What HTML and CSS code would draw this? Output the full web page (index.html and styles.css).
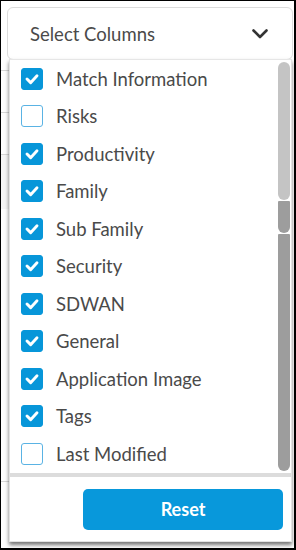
FILE: index.html
```html
<!DOCTYPE html>
<html>
<head>
<meta charset="utf-8">
<link rel="stylesheet" href="styles.css">
</head>
<body>
<div class="frame">
  <div class="select">
    <span class="select-label">Select Columns</span>
    <svg class="chevron" width="16" height="10" viewBox="0 0 16 10"><polyline points="1.5,1.5 8,8 14.5,1.5" fill="none" stroke="#333" stroke-width="2.6" stroke-linecap="round" stroke-linejoin="round"/></svg>
  </div>
  <div class="panel">
    <div class="list-wrap">
      <ul class="list">
        <li class="item"><span class="box checked"><svg viewBox="0 0 22 22"><polyline points="5.5,11 9.5,15 16.5,7.5"/></svg></span>Match Information</li>
        <li class="item"><span class="box"></span>Risks</li>
        <li class="item"><span class="box checked"><svg viewBox="0 0 22 22"><polyline points="5.5,11 9.5,15 16.5,7.5"/></svg></span>Productivity</li>
        <li class="item"><span class="box checked"><svg viewBox="0 0 22 22"><polyline points="5.5,11 9.5,15 16.5,7.5"/></svg></span>Family</li>
        <li class="item"><span class="box checked"><svg viewBox="0 0 22 22"><polyline points="5.5,11 9.5,15 16.5,7.5"/></svg></span>Sub Family</li>
        <li class="item"><span class="box checked"><svg viewBox="0 0 22 22"><polyline points="5.5,11 9.5,15 16.5,7.5"/></svg></span>Security</li>
        <li class="item"><span class="box checked"><svg viewBox="0 0 22 22"><polyline points="5.5,11 9.5,15 16.5,7.5"/></svg></span>SDWAN</li>
        <li class="item"><span class="box checked"><svg viewBox="0 0 22 22"><polyline points="5.5,11 9.5,15 16.5,7.5"/></svg></span>General</li>
        <li class="item"><span class="box checked"><svg viewBox="0 0 22 22"><polyline points="5.5,11 9.5,15 16.5,7.5"/></svg></span>Application Image</li>
        <li class="item"><span class="box checked"><svg viewBox="0 0 22 22"><polyline points="5.5,11 9.5,15 16.5,7.5"/></svg></span>Tags</li>
        <li class="item"><span class="box"></span>Last Modified</li>
      </ul>
      <div class="scrollbar">
        <div class="sb-thumb"></div>
        <div class="sb-mid"></div>
        <div class="sb-track"></div>
      </div>
    </div>
    <div class="footer">
      <button class="reset">Reset</button>
    </div>
  </div>
</div>
</body>
</html>
```

FILE: styles.css
```css
html, body {
  margin: 0;
  padding: 0;
  background: #000;
}
.frame {
  width: 296px;
  height: 550px;
  box-sizing: border-box;
  border-style: solid;
  border-color: #000;
  border-width: 1px 2px 2px 1px;
  padding: 6px 1px 0 6px;
  font-family: Lato, "Liberation Sans", sans-serif;
  background-color: #fff;
  background-image:
    linear-gradient(#d8d8d8, #d8d8d8),
    linear-gradient(#d8d8d8, #d8d8d8),
    linear-gradient(#d8d8d8, #d8d8d8),
    linear-gradient(#f6f6f6, #f6f6f6),
    linear-gradient(#d8d8d8, #d8d8d8);
  background-repeat: no-repeat;
  background-size: 8px 1px, 8px 1px, 8px 1px, 8px 54px, 8px 1px;
  background-position: 0 69px, 0 111px, 0 153px, 0 154px, 0 480px;
}
.select {
  width: 286px;
  height: 53px;
  box-sizing: border-box;
  border: 1px solid #dcdcdc;
  border-radius: 6px;
  background: #fff;
  display: flex;
  align-items: center;
  justify-content: space-between;
  padding: 0 24px 0 22px;
}
.select-label {
  font-size: 18.5px;
  color: #4a4a4a;
}
.chevron {
  display: block;
}
.panel {
  width: 283px;
  margin: 0 0 0 2px;
  background: #fff;
  border: 1px solid #e2e2e2;
  border-top-color: #e6e6e6;
  box-sizing: border-box;
  box-shadow: 0 3px 4px rgba(0, 0, 0, 0.55);
  position: relative;
  top: -1px;
}
.list-wrap {
  display: flex;
  border-bottom: 4px solid #dcdcdc;
}
.list {
  flex: 1;
  margin: 0;
  padding: 0;
  list-style: none;
}
.item {
  height: 37.5px;
  display: flex;
  align-items: center;
  padding-left: 11px;
  font-size: 18.5px;
  color: #4a4a4a;
}
.box {
  width: 22px;
  height: 22px;
  box-sizing: border-box;
  border: 1px solid #5ab3e4;
  border-radius: 3px;
  margin-right: 13px;
  flex: none;
  background: #fff;
}
.box.checked {
  background: #0796d9;
  border-color: #0796d9;
}
.box svg {
  display: block;
  width: 20px;
  height: 20px;
  fill: none;
  stroke: #fff;
  stroke-width: 3.2;
  stroke-linecap: round;
  stroke-linejoin: round;
}
.scrollbar {
  width: 12px;
  margin-right: 1px;
  padding-top: 2px;
  display: flex;
  flex-direction: column;
  gap: 1px;
}
.sb-thumb {
  height: 138px;
  background: #c4c4c4;
  border-radius: 6px;
}
.sb-mid {
  height: 32px;
  background: #9d9d9d;
  border-radius: 1px 1px 6px 6px;
}
.sb-track {
  flex: 1;
  margin-bottom: 2px;
  background: #9d9d9d;
  border-radius: 1px 1px 6px 6px;
}
.footer {
  display: flex;
  justify-content: flex-end;
  padding: 12px 8px 11px 0;
}
.reset {
  width: 200px;
  height: 41px;
  border: none;
  border-radius: 5px;
  background: #0898db;
  color: #fff;
  font-family: Lato, "Liberation Sans", sans-serif;
  font-weight: bold;
  font-size: 18px;
  padding: 0;
}
```
